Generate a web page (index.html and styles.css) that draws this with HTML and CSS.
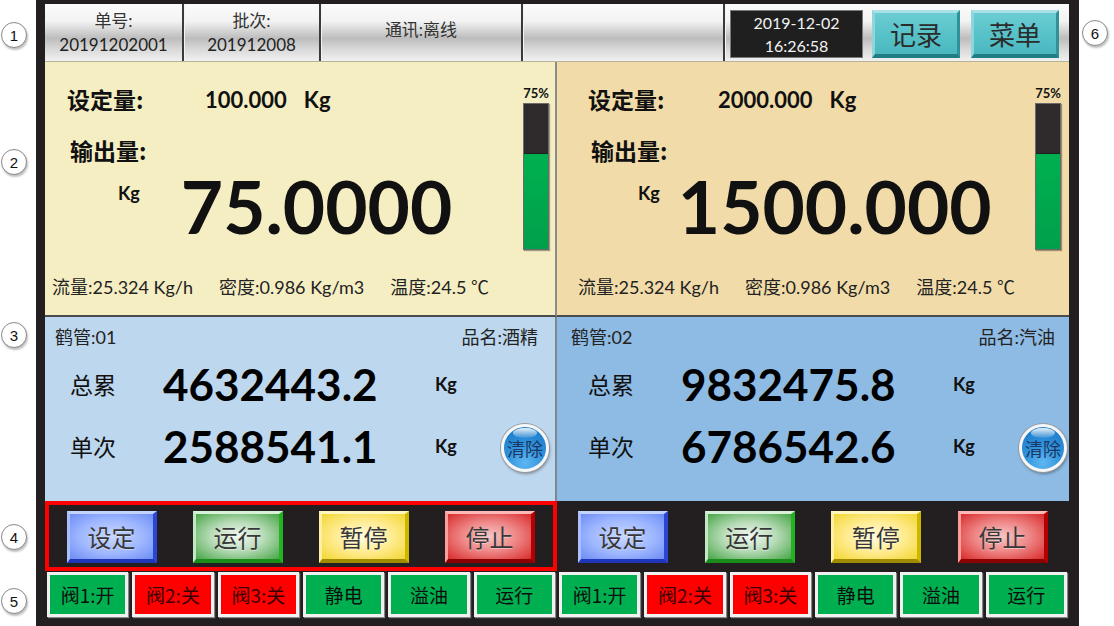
FILE: index.html
```html
<!DOCTYPE html>
<html lang="zh-CN">
<head>
<meta charset="utf-8">
<title>鹤管装车监控</title>
<link rel="stylesheet" href="styles.css">
</head>
<body>
<div class="page">
  <div class="gutter gutter-left">
    <span class="callout c1">1</span>
    <span class="callout c2">2</span>
    <span class="callout c3">3</span>
    <span class="callout c4">4</span>
    <span class="callout c5">5</span>
  </div>

  <div class="frame">
    <header class="topbar">
      <div class="hcell w1"><span class="hl">单号:</span><span class="hv">20191202001</span></div>
      <div class="hcell w2"><span class="hl">批次:</span><span class="hv">201912008</span></div>
      <div class="hcell w3"><span class="hl">通讯:离线</span></div>
      <div class="hcell w4"></div>
      <div class="hright">
        <div class="datebox"><span>2019-12-02</span><span>16:26:58</span></div>
        <div class="tbtn">记录</div>
        <div class="tbtn">菜单</div>
      </div>
    </header>

    <div class="board">
      <div class="ypanel left">
        <div class="ymain">
          <div class="setrow"><span class="lbl">设定量:</span><span class="setval">100.000</span><span class="unit">Kg</span></div>
          <div class="outlbl">输出量:</div>
          <div class="bigrow"><span class="kg">Kg</span><span class="big">75.0000</span></div>
          <div class="inforow"><span>流量:25.324 Kg/h</span><span>密度:0.986 Kg/m3</span><span>温度:24.5 ℃</span></div>
        </div>
        <div class="gauge"><div class="pct">75%</div><div class="bar"><div class="fill" style="height:66%"></div></div></div>
      </div>

      <div class="ypanel right">
        <div class="ymain">
          <div class="setrow"><span class="lbl">设定量:</span><span class="setval">2000.000</span><span class="unit">Kg</span></div>
          <div class="outlbl">输出量:</div>
          <div class="bigrow"><span class="kg">Kg</span><span class="big">1500.000</span></div>
          <div class="inforow"><span>流量:25.324 Kg/h</span><span>密度:0.986 Kg/m3</span><span>温度:24.5 ℃</span></div>
        </div>
        <div class="gauge"><div class="pct">75%</div><div class="bar"><div class="fill" style="height:66%"></div></div></div>
      </div>

      <div class="bpanel left">
        <div class="btop"><span>鹤管:01</span><span>品名:酒精</span></div>
        <div class="brow"><span class="blbl">总累</span><span class="bnum">4632443.2</span><span class="bunit">Kg</span></div>
        <div class="brow"><span class="blbl">单次</span><span class="bnum">2588541.1</span><span class="bunit">Kg</span><span class="clear">清除</span></div>
      </div>

      <div class="bpanel right">
        <div class="btop"><span>鹤管:02</span><span>品名:汽油</span></div>
        <div class="brow"><span class="blbl">总累</span><span class="bnum">9832475.8</span><span class="bunit">Kg</span></div>
        <div class="brow"><span class="blbl">单次</span><span class="bnum">6786542.6</span><span class="bunit">Kg</span><span class="clear">清除</span></div>
      </div>

      <div class="btnrow left">
        <div class="cbtn blue">设定</div>
        <div class="cbtn green">运行</div>
        <div class="cbtn yellow">暂停</div>
        <div class="cbtn red">停止</div>
      </div>
      <div class="btnrow right">
        <div class="cbtn blue">设定</div>
        <div class="cbtn green">运行</div>
        <div class="cbtn yellow">暂停</div>
        <div class="cbtn red">停止</div>
      </div>
    </div>

    <div class="status">
      <div class="st on">阀1:开</div>
      <div class="st off">阀2:关</div>
      <div class="st off">阀3:关</div>
      <div class="st on">静电</div>
      <div class="st on">溢油</div>
      <div class="st on">运行</div>
      <div class="st on">阀1:开</div>
      <div class="st off">阀2:关</div>
      <div class="st off">阀3:关</div>
      <div class="st on">静电</div>
      <div class="st on">溢油</div>
      <div class="st on">运行</div>
    </div>
  </div>

  <div class="gutter gutter-right">
    <span class="callout c6">6</span>
  </div>
</div>
</body>
</html>
```

FILE: styles.css
```css
* { box-sizing: border-box; }

body {
  margin: 0;
  background: #ffffff;
  font-family: "Lato", "Noto Sans CJK SC", sans-serif;
  color: #111;
}

.page {
  display: flex;
  width: 1114px;
  height: 626px;
}

/* callout markers */
.gutter {
  display: flex;
  flex-direction: column;
}
.gutter-left { width: 36px; padding-left: 1px; }
.gutter-right { width: 35px; padding-left: 3px; }

.callout {
  width: 26px;
  height: 26px;
  border: 1px solid #8a8a8a;
  border-radius: 50%;
  background: #fff;
  box-shadow: 1px 2px 2px rgba(0,0,0,0.25);
  display: flex;
  align-items: center;
  justify-content: center;
  font-family: "Liberation Sans", sans-serif;
  font-size: 15px;
  color: #111;
}
.c1 { margin-top: 22px; }
.c2 { margin-top: 101px; }
.c3 { margin-top: 147px; }
.c4 { margin-top: 176px; }
.c5 { margin-top: 38px; }
.c6 { margin-top: 20px; }

/* main frame */
.frame {
  width: 1043px;
  height: 626px;
  background: #231f20;
  padding: 4px 10px 9px 9px;
  display: flex;
  flex-direction: column;
}

/* top bar */
.topbar {
  height: 58px;
  display: flex;
  background: linear-gradient(to bottom, #fbfbfb 0%, #f3f3f3 30%, #bdbdbd 60%, #d9d9d9 80%, #f1f1f1 100%);
  border-bottom: 1px solid #b8b29a;
}
.hcell {
  display: flex;
  flex-direction: column;
  align-items: center;
  justify-content: center;
  border-right: 2px solid #3a3a3a;
  box-shadow: 1px 0 0 #f4f4f4;
  color: #222;
}
.w1 { width: 139px; }
.w2 { width: 137px; }
.w3 { width: 202px; padding-bottom: 6px; }
.w4 { width: 202px; }
.hl { font-size: 17px; line-height: 24px; color: #333; }
.hv { font-size: 17px; line-height: 24px; }

.hright {
  flex: 1;
  display: flex;
  align-items: flex-start;
  padding-top: 6px;
  padding-left: 5px;
}
.datebox {
  width: 133px;
  height: 48px;
  background: #1f1f1f;
  border: 1px solid #7a7a7a;
  color: #f2f2f2;
  font-size: 16px;
  display: flex;
  flex-direction: column;
  align-items: center;
  justify-content: center;
  line-height: 23px;
}
.tbtn {
  width: 88px;
  height: 48px;
  margin-left: 9px;
  background: linear-gradient(to bottom, #6ccdd3 0%, #58c2c9 50%, #4ab7bf 100%);
  border-top: 3px solid #a8e2e6;
  border-left: 3px solid #8ed6db;
  border-right: 3px solid #2f9299;
  border-bottom: 4px solid #217d84;
  font-family: "Noto Sans CJK SC", sans-serif;
  font-size: 26px;
  color: #2b2b2b;
  display: flex;
  align-items: center;
  justify-content: center;
}
.tbtn + .tbtn { margin-left: 11px; }

/* board */
.board {
  display: grid;
  grid-template-columns: 512px 512px;
  grid-template-rows: 255px 184px 70px;
}

.ypanel {
  display: flex;
  border-bottom: 2px solid #4b4b4b;
}
.ypanel.left { background: #f5eec3; border-right: 2px solid #8c8c8c; }
.ypanel.right { background: #f1dca9; }

.ymain {
  flex: 1;
  display: flex;
  flex-direction: column;
  padding-top: 23px;
}
.ypanel.left .ymain { padding-left: 22px; }
.ypanel.right .ymain { padding-left: 31px; }

.setrow {
  display: flex;
  align-items: center;
  height: 28px;
}
.lbl, .outlbl {
  font-family: "Noto Sans CJK SC", sans-serif;
  font-weight: 700;
  font-size: 23px;
  line-height: 28px;
  color: #111;
}
.ypanel.left .lbl { width: 138px; }
.ypanel.right .lbl { width: 130px; }
.setval { font-weight: 700; font-size: 22px; }
.unit { font-weight: 700; font-size: 22px; margin-left: 17px; }

.outlbl { margin-top: 23px; margin-left: 3px; }

.bigrow {
  display: flex;
  height: 84px;
  align-items: flex-start;
}
.ypanel.left .bigrow { padding-left: 51px; }
.ypanel.right .bigrow { padding-left: 50px; }
.kg {
  font-weight: 700;
  font-size: 18px;
  line-height: 20px;
  margin-top: 19px;
}
.big {
  font-weight: 700;
  font-size: 73px;
  line-height: 84px;
}
.ypanel.left .big { margin-left: 41px; }
.ypanel.right .big { margin-left: 18px; }

.inforow {
  display: flex;
  gap: 26px;
  margin-top: 28px;
  font-size: 18px;
  line-height: 22px;
  color: #222;
}
.ypanel.left .inforow { margin-left: -15px; }
.ypanel.right .inforow { margin-left: -10px; }

.gauge {
  width: 30px;
  display: flex;
  flex-direction: column;
  align-items: center;
  padding-top: 24px;
}
.ypanel.left .gauge { margin-right: 4px; }
.ypanel.right .gauge { margin-right: 6px; }
.pct {
  font-weight: 700;
  font-size: 13px;
  line-height: 14px;
  color: #111;
}
.bar {
  margin-top: 3px;
  width: 26px;
  height: 147px;
  background: #2f2b2c;
  border: 1px solid #6b6b6b;
  box-shadow: 1px 1px 1px rgba(0,0,0,0.35);
  display: flex;
  flex-direction: column;
  justify-content: flex-end;
}
.fill {
  background: linear-gradient(to bottom, #00b050, #00a04a);
  border-top: 1px solid #1f1f1f;
}

/* blue panels */
.bpanel {
  display: flex;
  flex-direction: column;
  padding-top: 9px;
}
.bpanel.left { background: #bdd7ee; border-right: 2px solid #7a8793; }
.bpanel.right { background: #8ebbe4; }

.btop {
  display: flex;
  justify-content: space-between;
  font-size: 18px;
  line-height: 22px;
  color: #222;
}
.bpanel.left .btop { padding: 0 17px 0 10px; }
.bpanel.right .btop { padding: 0 14px 0 14px; }

.brow {
  display: flex;
  align-items: center;
  height: 62px;
}
.btop + .brow { margin-top: 5px; }
.bpanel.left .brow { padding-left: 25px; }
.bpanel.right .brow { padding-left: 31px; }
.blbl {
  width: 93px;
  font-family: "Noto Sans CJK SC", sans-serif;
  font-size: 23px;
  color: #111;
}
.bnum {
  width: 272px;
  font-weight: 700;
  font-size: 44px;
  color: #000;
}
.bunit {
  width: 24px;
  font-weight: 700;
  font-size: 18px;
}

.clear {
  position: relative;
  width: 48px;
  height: 48px;
  margin-left: 42px;
  margin-top: 4px;
  border-radius: 50%;
  border: 3px solid #f6f6f6;
  box-shadow: 0 0 0 1px #9a9a9a, 1px 2px 3px rgba(0,0,0,0.35);
  background: radial-gradient(circle at 50% 85%, #5fb7f2 0%, #2e92dc 45%, #1673c2 100%);
  font-family: "Noto Sans CJK SC", sans-serif;
  font-size: 18px;
  color: #1c3763;
  display: flex;
  align-items: center;
  justify-content: center;
  overflow: hidden;
}
.clear::before {
  content: "";
  position: absolute;
  left: 9px;
  top: 1px;
  width: 24px;
  height: 10px;
  border-radius: 50%;
  background: linear-gradient(to bottom, rgba(255,255,255,0.9), rgba(255,255,255,0.1));
}

/* control buttons */
.btnrow {
  display: flex;
  justify-content: space-between;
  align-items: flex-start;
}
.btnrow.left {
  border: 4px solid #ff0000;
  padding: 6px 18px 0 18px;
}
.btnrow.right { padding: 10px 21px 0 21px; }

.cbtn {
  width: 90px;
  height: 52px;
  border-style: solid;
  border-width: 3px 4px 4px 3px;
  font-family: "Noto Sans CJK SC", sans-serif;
  font-size: 24px;
  color: #383838;
  display: flex;
  align-items: center;
  justify-content: center;
  text-shadow: 0 1px 0 rgba(255,255,255,0.4);
}
.cbtn.blue {
  background: radial-gradient(ellipse at 50% 50%, #c9d8ff 0%, #9db6ff 55%, #6d8cf4 100%);
  border-color: #c3d3ff #2a46d6 #1f36b8 #a9bfff;
}
.cbtn.green {
  background: radial-gradient(ellipse at 50% 50%, #f1f8f1 0%, #b9dcb9 45%, #48a648 100%);
  border-color: #d9f0d9 #22b322 #1a8c1a #c3e6c3;
}
.cbtn.yellow {
  background: radial-gradient(ellipse at 50% 50%, #fffbe0 0%, #ffeb90 50%, #f2d733 100%);
  border-color: #fff6bd #cdb500 #9e8b00 #fff0a0;
}
.cbtn.red {
  background: radial-gradient(ellipse at 50% 50%, #f7c4c4 0%, #ef8a8a 45%, #d92c2c 100%);
  border-color: #ffb8b8 #b40000 #8c0000 #ff9c9c;
}

/* status row */
.status {
  flex: 1;
  display: grid;
  grid-template-columns: repeat(12, 1fr);
  gap: 4px;
  padding: 1px 2px 0 2px;
}
.st {
  border: 3px solid #f1f1f1;
  box-shadow: 1px 1px 1px rgba(160,160,160,0.8);
  font-family: "Noto Sans CJK SC", sans-serif;
  font-size: 19px;
  display: flex;
  align-items: center;
  justify-content: center;
  color: #0d0d0d;
}
.st.on { background: #00b050; }
.st.off { background: #ff0000; color: #3a0000; }
```
